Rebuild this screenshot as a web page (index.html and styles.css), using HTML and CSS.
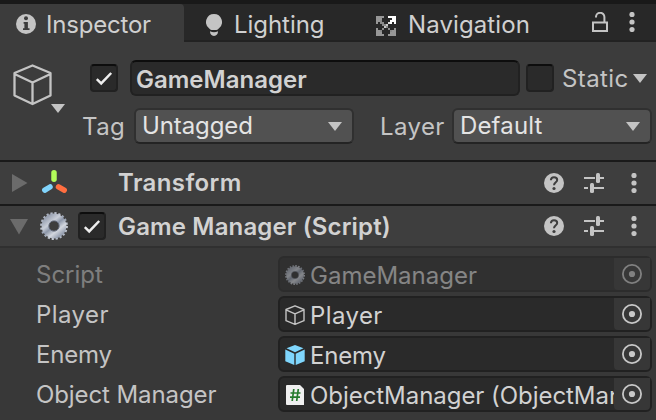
FILE: index.html
```html
<!DOCTYPE html>
<html lang="en">
<head>
<meta charset="utf-8">
<title>Inspector</title>
<link rel="stylesheet" href="styles.css">
</head>
<body>
<svg class="defs" aria-hidden="true">
  <defs>
    <linearGradient id="steel" x1="0.1" y1="0" x2="0.9" y2="1">
      <stop offset="0" stop-color="#9aa2b2"/><stop offset="0.3" stop-color="#c9ced8"/><stop offset="0.5" stop-color="#8c96a8"/><stop offset="0.75" stop-color="#d3d7de"/><stop offset="1" stop-color="#98a1b2"/>
    </linearGradient>
    <symbol id="gear" viewBox="0 0 28 28">
      <circle cx="14" cy="14" r="12.8" fill="none" stroke="url(#steel)" stroke-width="2.2" stroke-dasharray="2.2 1.821"/>
      <circle cx="14" cy="14" r="8.7" fill="none" stroke="url(#steel)" stroke-width="7.4"/>
      <circle cx="14" cy="14" r="5.2" fill="none" stroke="#596173" stroke-width="0.8"/>
    </symbol>
    <symbol id="check" viewBox="0 0 28 28"><path d="M6.800 15.200l4.400 4.200L21.200 9" fill="none" stroke="#eee" stroke-width="2.500"/></symbol>
    <symbol id="help" viewBox="0 0 20 20"><circle cx="10" cy="10" r="10" fill="#c4c4c4"/><path d="M6.900 7.200C7 5.200 8.200 4.200 10 4.200s3.200 1 3.200 2.700c0 2.200-3.200 2.400-3.200 5.300" fill="none" stroke="#3e3e3e" stroke-width="2"/><circle cx="10" cy="15.500" r="1.600" fill="#3e3e3e"/></symbol>
    <symbol id="preset" viewBox="0 0 20 20"><path d="M0 5h11M16 5h4M0 15h4M10 15h10" stroke="#c4c4c4" stroke-width="2"/><rect x="12" y="0" width="4" height="10" rx="1.500" fill="#c4c4c4"/><rect x="6" y="10" width="4" height="10" rx="1.500" fill="#c4c4c4"/></symbol>
    <symbol id="dots" viewBox="0 0 6 20"><g fill="#c4c4c4"><circle cx="3" cy="2.500" r="2.600"/><circle cx="3" cy="10" r="2.600"/><circle cx="3" cy="17.500" r="2.600"/></g></symbol>
    <symbol id="target" viewBox="0 0 20 20"><circle cx="10" cy="10" r="9.100" fill="none" stroke="#c8c8c8" stroke-width="1.800"/><circle cx="10" cy="10" r="3.100" fill="#c8c8c8"/></symbol>
    <symbol id="arrow" viewBox="0 0 14 9"><path d="M0 0h14L7 9z" fill="#c4c4c4"/></symbol>
  </defs>
</svg>

<header class="tabs">
  <div class="tab active">
    <svg class="info" viewBox="0 0 20 20"><circle cx="10" cy="10" r="10" fill="#c4c4c4"/><circle cx="10" cy="4.200" r="2" fill="#3c3c3c"/><path d="M7.600 8h4.300v6.200h1.600V16H7v-1.800h1.400V9.800h-.8z" fill="#3c3c3c"/></svg>
    <span class="t-inspector">Inspector</span>
  </div>
  <div class="tab lighting">
    <svg class="bulb" viewBox="0 0 16 22"><path d="M8 0a8 8 0 0 1 5 14.200Q11.800 15.800 10.500 16h-5Q4.200 15.800 3 14.200A8 8 0 0 1 8 0zM4 17.300q4 1.800 8 0c0 2.700-1.300 4.700-4 4.700s-4-2-4-4.700z" fill="#c4c4c4"/></svg>
    <span class="t-lighting">Lighting</span>
  </div>
  <div class="tab navigation">
    <svg class="nav" viewBox="0 0 20 20">
      <path d="M0 0h8v2H6v2H4v2H2v2H0zM0 20v-8h2v2h2v2h2v2h2v2zM20 20h-8v-2h2v-2h2v-2h2v-2h2z" fill="#979797"/>
      <path d="M4 4h2v2h2v2h2v4H8v2H6v2H4v-2h2v-2h2v-2H6V8H4zM10 10h2v2h2v2h2v2h-2v-2h-2v-2h-2z" fill="#8a8a8a"/>
      <path d="M8 10h2v2H8zM10 8h2v2h-2z" fill="#c8c8c8"/>
      <path d="M12 6h2v2h-2z" fill="#ddd"/>
      <path d="M12 0h8v8h-2V6h-2v2h-2V4h2V2h-4z" fill="#fff"/>
    </svg>
    <span class="t-navigation">Navigation</span>
  </div>
  <svg class="lock" viewBox="0 0 16 20"><path d="M1 10.500h14V19H1zM4 5.500V5a4.200 4.200 0 0 1 8.400 0v5" fill="none" stroke="#c4c4c4" stroke-width="2"/></svg>
  <svg class="tab-dots"><use href="#dots"/></svg>
</header>

<section class="object">
  <div class="object-icon">
    <svg class="cube" viewBox="0 0 40 42"><path d="M20 1.500L38 9v22.500L20 40 2 31.500V9zM2 10l18 8.500L38 10M20 18.500V40" fill="none" stroke="#c4c4c4" stroke-width="2.300" stroke-linejoin="round"/></svg>
    <svg class="arrow"><use href="#arrow"/></svg>
  </div>
  <div class="object-fields">
    <div class="name-row">
      <div class="box"><svg><use href="#check"/></svg></div>
      <div class="name"><span class="t-name">GameManager</span></div>
      <div class="box static-box"></div>
      <span class="t-static">Static</span>
      <svg class="arrow"><use href="#arrow"/></svg>
    </div>
    <div class="tag-row">
      <span class="t-tag">Tag</span>
      <div class="select tag"><span class="t-untagged">Untagged</span><svg class="arrow"><use href="#arrow"/></svg></div>
      <span class="t-layer">Layer</span>
      <div class="select layer"><span class="t-default">Default</span><svg class="arrow"><use href="#arrow"/></svg></div>
    </div>
  </div>
</section>

<section class="component transform">
  <svg class="fold" viewBox="0 0 18 18"><path d="M2 0l15.500 9L2 18z" fill="#6b6b6b"/></svg>
  <svg class="axes" viewBox="0 0 28 28"><g stroke-width="5.500" stroke-linecap="round"><path d="M14 3.700v6.600" stroke="#b2fc59"/><path d="M10 18l-5.200 3.100" stroke="#81d4fc"/><path d="M18.500 17.800l5.700 3.300" stroke="#ff6e40"/></g></svg>
  <h2 class="t-transform">Transform</h2>
  <div class="actions"><svg class="i20"><use href="#help"/></svg><svg class="i20"><use href="#preset"/></svg><svg class="i6"><use href="#dots"/></svg></div>
</section>
<section class="component script">
  <svg class="fold" viewBox="0 0 18 18"><path d="M0 2h18L9 17.500z" fill="#6b6b6b"/></svg>
  <svg class="axes"><use href="#gear"/></svg>
  <div class="box"><svg><use href="#check"/></svg></div>
  <h2 class="t-script">Game Manager (Script)</h2>
  <div class="actions"><svg class="i20"><use href="#help"/></svg><svg class="i20"><use href="#preset"/></svg><svg class="i6"><use href="#dots"/></svg></div>
</section>

<main class="properties">
  <div class="property disabled">
    <span class="label p-script">Script</span>
    <div class="field"><div class="value"><svg class="i20"><use href="#gear"/></svg><span class="v-game">GameManager</span></div><div class="pick"><svg class="i20"><use href="#target"/></svg></div></div>
  </div>
  <div class="property">
    <span class="label p-player">Player</span>
    <div class="field"><div class="value"><svg class="i20" viewBox="0 0 20 20"><path d="M10 .8l9 3.700v11.200L10 19.300 1 15.700V4.500zM1 4.800l9 4 9-4M10 8.800v10.500" fill="none" stroke="#c4c4c4" stroke-width="1.400" stroke-linejoin="round"/></svg><span class="v-player">Player</span></div><div class="pick"><svg class="i20"><use href="#target"/></svg></div></div>
  </div>
  <div class="property">
    <span class="label p-enemy">Enemy</span>
    <div class="field"><div class="value"><svg class="i20" viewBox="0 0 20 20"><path d="M10 0l8.500 3.200-8.500 4-8.500-4zM.3 4.600l9 4.200V20L.3 16.300zM19.700 4.600l-9 4.200V20l9-3.700z" fill="#7fd6fd"/></svg><span class="v-enemy">Enemy</span></div><div class="pick"><svg class="i20"><use href="#target"/></svg></div></div>
  </div>
  <div class="property">
    <span class="label p-object">Object Manager</span>
    <div class="field"><div class="value"><svg class="i20" viewBox="0 0 20 20"><path d="M2 0h13l4 4v16H2q-1 0-1-1V1q0-1 1-1z" fill="#f0f0f0"/><path d="M8.800 4L7.200 16M13.300 4l-1.600 12M5.500 8h10M5 12.200h10" fill="none" stroke="#267b2d" stroke-width="1.700"/></svg><span class="v-object">ObjectManager (ObjectManager)</span></div><div class="pick"><svg class="i20"><use href="#target"/></svg></div></div>
  </div>
</main>
</body>
</html>
```
FILE: styles.css
```css
* { box-sizing: border-box; }
body { margin: 0; width: 656px; height: 420px; overflow: hidden; background: #383838; color: #c4c4c4; font: 24px/28px Inter, "Liberation Sans", sans-serif; letter-spacing: 0; white-space: nowrap; }
svg { display: block; flex: none; }
.defs { position: absolute; width: 0; height: 0; }
.arrow { width: 14px; height: 9px; }
.i20 { width: 20px; height: 20px; }
.i6 { width: 6px; height: 20px; }

.tabs { display: flex; height: 42px; border-top: 4px solid #191919; background: #282828; box-shadow: inset 0 -2px #222; }
.tab { display: flex; align-items: flex-start; height: 38px; padding-top: 6px; color: #d0d0d0; }
.tab span { padding-top: 1px; }
.tab.active { width: 184px; padding-left: 16px; background: #3c3c3c; border-radius: 0 4px 0 0; }
.info { width: 20px; height: 20px; margin: 4px 10px 0 0; }
.lighting { width: 191px; padding-left: 22px; }
.bulb { width: 16px; height: 22px; margin: 4px 12px 0 0; }
.navigation { width: 217px; padding-left: 1px; }
.nav { width: 20px; height: 20px; margin: 6px 12px 0 0; }
.lock { width: 16px; height: 20px; margin: 8px 0 0; }
.tab-dots { width: 6px; height: 20px; margin: 8px 0 0 21px; }
.t-inspector { letter-spacing: -.2px; }
.t-lighting { letter-spacing: -.05px; }
.t-navigation { letter-spacing: .1px; }

.object { display: flex; height: 118px; padding: 18px 4px 0 12px; background: #3c3c3c; }
.object-icon { display: flex; flex-direction: column; width: 78px; padding-top: 4px; }
.cube { width: 41px; height: 42px; }
.object-icon .arrow { margin: -2px 0 0 39px; }
.object-fields { flex: 1; }
.name-row { display: flex; align-items: center; height: 36px; }
.box { width: 28px; height: 28px; flex: none; border: 2px solid #212121; border-top-color: #0d0d0d; border-radius: 4px; background: #2a2a2a; }
.box svg { width: 28px; height: 28px; margin: -2px; }
.name { width: 390px; height: 36px; margin: 0 6px 0 12px; padding: 4px 0 0 4px; border: 2px solid #212121; border-top-color: #0d0d0d; border-radius: 6px; background: #2a2a2a; color: #d2d2d2; font-weight: 600; }
.t-static { width: 71px; margin-left: 8px; padding-top: 1px; letter-spacing: .4px; }
.tag-row { display: flex; align-items: center; height: 36px; margin-top: 12px; margin-left: -8px; }
.t-tag { width: 52px; padding-top: 2px; letter-spacing: .4px; }
.select { display: flex; align-items: center; justify-content: space-between; height: 36px; padding: 0 10px 0 6px; border: 2px solid #303030; border-bottom-color: #242424; border-radius: 6px; background: #515151; color: #e4e4e4; }
.select.tag { width: 220px; }
.t-untagged { letter-spacing: -.1px; }
.select.layer { width: 200px; }
.t-default { letter-spacing: .15px; }
.t-layer { width: 98px; padding: 2px 0 0 26px; letter-spacing: .4px; }

.component { display: flex; align-items: center; background: #3e3e3e; border-top: 2px solid #1a1a1a; }
.transform { height: 44px; padding-left: 10px; }
.script { height: 44px; padding-left: 10px; border-bottom: 2px solid #303030; }
.fold { width: 18px; height: 18px; }
.axes { width: 28px; height: 28px; margin-left: 12px; }
.component .box { margin-left: 10px; }
h2 { margin: 0; font-size: 24px; font-weight: 600; line-height: 28px; color: #d2d2d2; }
.t-transform { margin-left: 50px; letter-spacing: .4px; }
.t-script { margin-left: 12px; padding-top: 1px; letter-spacing: .15px; }
.actions { display: flex; gap: 20px; margin-left: auto; padding-right: 19px; }
.actions .i6 { margin-left: 7px; }

.properties { display: grid; gap: 4px; padding: 8px 4px 0 36px; }
.property { display: grid; grid-template-columns: 242px 374px; align-items: center; height: 36px; }
.label { padding-top: 1px; }
.p-player { letter-spacing: .45px; }
.p-enemy { letter-spacing: -.2px; }
.p-object { letter-spacing: -.1px; }
.field { display: flex; height: 36px; border: 2px solid #212121; border-radius: 6px; background: #2a2a2a; color: #d2d2d2; }
.value { display: flex; flex: 1; min-width: 0; overflow: hidden; padding-left: 5px; align-items: center; }
.value .i20 { margin: 2px 5px 0 0; }
.value span { padding-top: 3px; }
.v-player { letter-spacing: .4px; }
.v-enemy { letter-spacing: -.2px; }
.v-object { letter-spacing: -.05px; }
.pick { display: grid; place-items: center; width: 36px; height: 32px; flex: none; border-radius: 0 0 4px 4px; background: #373737; }
.disabled .label { opacity: .5; }
.disabled .field { opacity: .5; }
```
